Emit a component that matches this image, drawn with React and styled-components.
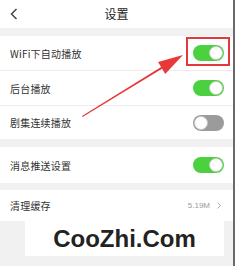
import React from 'react';
import styled, { createGlobalStyle } from 'styled-components';

const GlobalStyle = createGlobalStyle`
  html, body {
    margin: 0;
    padding: 0;
    background: #f1f1f1;
  }
  * {
    box-sizing: border-box;
  }
`;

const Page = styled.div`
  position: relative;
  width: 235px;
  height: 266px;
  overflow: hidden;
  background: #f1f1f1;
  font-family: 'Noto Sans CJK SC', 'Noto Sans', sans-serif;
  color: #333;
  border-right: 2px solid #6a6a6a;
`;

const Header = styled.header`
  display: grid;
  grid-template-columns: 40px 1fr 40px;
  align-items: center;
  height: 28px;
  background: #fff;
`;

const BackButton = styled.div`
  display: flex;
  align-items: center;
  padding-left: 9px;
  height: 100%;
`;

const Title = styled.h1`
  margin: 0;
  text-align: center;
  font-size: 12px;
  font-weight: 400;
  color: #222;
  line-height: 1;
`;

const Group = styled.section`
  margin-top: ${({ $gap }) => $gap}px;
  background: #fff;
`;

const Row = styled.div`
  position: relative;
  display: flex;
  align-items: center;
  justify-content: space-between;
  height: ${({ $h }) => $h}px;
  padding: 0 9px 0 10px;

  & + & {
    border-top: 1px solid #ececec;
  }
`;

const Label = styled.span`
  font-size: 10px;
  color: #333;
  letter-spacing: 0.2px;
`;

const Track = styled.div`
  position: relative;
  width: 31px;
  height: 16px;
  border-radius: 8px;
  background: ${({ $on }) => ($on ? '#4bd13f' : '#9b9b9b')};
`;

const Knob = styled.div`
  position: absolute;
  top: 1px;
  left: ${({ $on }) => ($on ? '16px' : '1px')};
  width: 14px;
  height: 14px;
  border-radius: 50%;
  background: #fff;
  border: 1px solid #c8c8c8;
`;

const Value = styled.div`
  display: flex;
  align-items: center;
  gap: 7px;
  font-family: 'Liberation Sans', Arial, sans-serif;
  font-size: 8px;
  color: #9a9a9a;
  padding-right: 3px;
`;

const Overlay = styled.svg`
  position: absolute;
  left: 0;
  top: 0;
  pointer-events: none;
`;

const Watermark = styled.div`
  position: absolute;
  left: 25px;
  top: 221px;
  width: 199px;
  height: 35px;
  background: #fff;
  display: flex;
  align-items: center;
  justify-content: center;
  font-family: 'Liberation Sans', Arial, sans-serif;
  font-weight: 700;
  font-size: 24px;
  color: #222;
`;

const Toggle = ({ on }) => (
  <Track $on={on}>
    <Knob $on={on} />
  </Track>
);

const settings = [
  { label: 'WiFi下自动播放', on: true, h: 34 },
  { label: '后台播放', on: true, h: 35 },
  { label: '剧集连续播放', on: false, h: 34 },
];

export default function App() {
  return (
    <>
      <GlobalStyle />
      <Page>
        <Header>
          <BackButton>
            <svg width="10" height="14" viewBox="0 0 10 14">
              <polyline points="7.5,2 2.5,7 7.5,12" fill="none" stroke="#444" strokeWidth="1.5" />
            </svg>
          </BackButton>
          <Title>设置</Title>
          <div />
        </Header>

        <Group $gap={8}>
          {settings.map((s) => (
            <Row key={s.label} $h={s.h}>
              <Label>{s.label}</Label>
              <Toggle on={s.on} />
            </Row>
          ))}
        </Group>

        <Group $gap={8}>
          <Row $h={36}>
            <Label>消息推送设置</Label>
            <Toggle on />
          </Row>
        </Group>

        <Group $gap={7}>
          <Row $h={31}>
            <Label>清理缓存</Label>
            <Value>
              5.19M
              <svg width="4" height="7" viewBox="0 0 4 7">
                <polyline points="0.5,0.5 3.5,3.5 0.5,6.5" fill="none" stroke="#aaa" strokeWidth="1" />
              </svg>
            </Value>
          </Row>
        </Group>

        <Overlay width="235" height="266" viewBox="0 0 235 266">
          <rect x="187" y="38" width="42" height="27" fill="none" stroke="#e2393c" strokeWidth="2" />
          <polygon
            points="82,116 161.1,67.1 158,61.9 183,55 165.2,73.9 162.1,68.7 82.6,117"
            fill="#e8393a"
          />
        </Overlay>

        <Watermark>CooZhi.Com</Watermark>
      </Page>
    </>
  );
}
